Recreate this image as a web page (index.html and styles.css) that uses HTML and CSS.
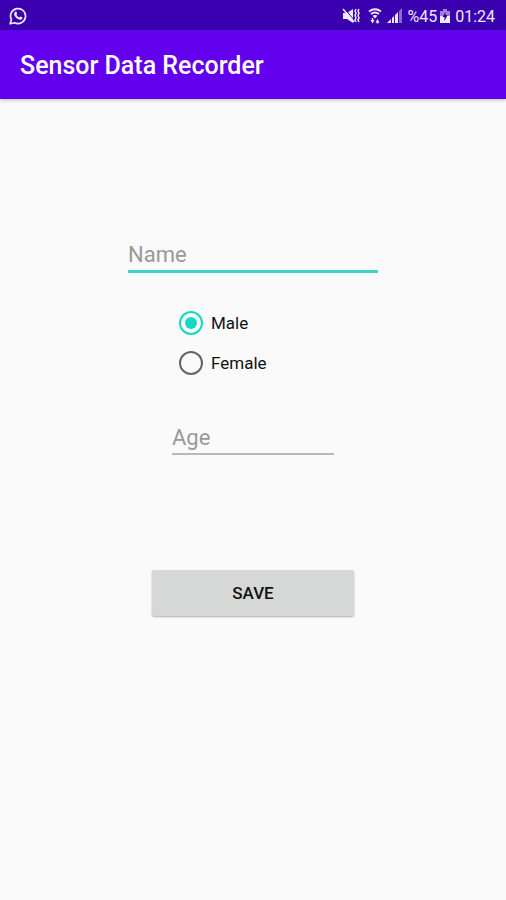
FILE: index.html
```html
<!DOCTYPE html>
<html lang="en">
<head>
<meta charset="utf-8">
<meta name="viewport" content="width=device-width, initial-scale=1">
<title>Sensor Data Recorder</title>
<link rel="stylesheet" href="styles.css">
</head>
<body>
<div class="status-bar">
  <svg class="icon-chat" width="18" height="18" viewBox="0 0 18 18" aria-hidden="true">
    <path d="M1.2 16.8l1.2-4.3A7.5 7.5 0 1 1 5.6 15.7z" fill="none" stroke="currentColor" stroke-width="1.7" stroke-linejoin="round"/>
    <path d="M6.2 4.7c.5-.5 1-.3 1.2.1l.7 1.6c.1.4-.5 1-.7 1.3.7 1.3 1.700 2.200 3 2.800.4-.4.8-1.100 1.200-1l1.700.9c.4.3.1 1.100-.4 1.600-1.200 1.100-2.800.7-4.400-.2-1.500-.9-2.800-2.400-3.200-3.700-.4-1.300.1-2.700.9-3.400z" fill="currentColor"/>
  </svg>
  <div class="status-info">
    <svg width="18" height="16" viewBox="0 0 18 16" aria-hidden="true">
      <path d="M1 5h4l6-4v14l-6-4H1z" fill="currentColor"/>
      <path d="M3 1l9 11" stroke="#3a00b0" stroke-width="1"/>
      <path d="M1 1l11 13" stroke="currentColor" stroke-width="1.500"/>
      <path d="M14 1l-1 2 1 2-1 2.500 1 2.500-1 2 1 2M17 1l-1 2 1 2-1 2.500 1 2.500-1 2 1 2" fill="none" stroke="currentColor" stroke-width="1.500"/>
    </svg>
    <svg class="icon-wifi" width="14" height="16" viewBox="0 0 14 16" aria-hidden="true">
      <path d="M1 3.500q6-4.500 12 0M3 6q4-3 8 0" fill="none" stroke="currentColor" stroke-width="1.800"/>
      <path d="M4.500 7.800q2.500-1.600 5 0L7 10.500z" fill="currentColor"/>
      <path d="M2.500 12h4L4.500 15.500zM7.500 14.500h4L9.500 11z" fill="currentColor"/>
      <path d="M4.500 10v3M9.500 13v2.500" stroke="currentColor" stroke-width="1.500"/>
    </svg>
    <svg class="icon-signal" width="16" height="16" viewBox="0 0 16 16" aria-hidden="true">
      <path d="M0 15l4-4v4zM5 15v-5l2-2v7zM8 15V7l3-3v11z" fill="currentColor"/>
      <path d="M12 15V3l3-3v15z" fill="currentColor" opacity=".45"/>
    </svg>
    <span>%45</span>
    <svg class="icon-battery" width="10" height="16" viewBox="0 0 10 16" aria-hidden="true">
      <path d="M3 1h4v2h3v5H0V3h3z" fill="currentColor" opacity=".55"/>
      <path d="M0 8h10v7H0z" fill="currentColor"/>
      <path d="M5.500 4L2.500 9h2v4l3-6h-2z" fill="#280078"/>
    </svg>
    <time>01:24</time>
  </div>
</div>
<header class="app-bar">
  <h1>Sensor Data Recorder</h1>
</header>
<main>
  <form class="form">
    <input class="field field-name" type="text" placeholder="Name" aria-label="Name">
    <div class="choices" role="radiogroup" aria-label="Gender">
      <label class="choice"><input type="radio" name="gender" checked>Male</label>
      <label class="choice"><input type="radio" name="gender">Female</label>
    </div>
    <input class="field field-age" type="text" inputmode="numeric" placeholder="Age" aria-label="Age">
    <button class="save" type="button">SAVE</button>
  </form>
</main>
</body>
</html>
```
FILE: styles.css
```css
* {
  box-sizing: border-box;
}

body {
  margin: 0;
  min-height: 100vh;
  background: #fafafa;
  color: #111;
  font-family: Roboto, "Liberation Sans", sans-serif;
}

.status-bar {
  display: flex;
  align-items: center;
  justify-content: space-between;
  height: 30px;
  padding: 2px 11px 0 9px;
  background: #3a00b0;
  color: #f0e9fc;
  font-size: 16px;
}

.status-info {
  display: flex;
  align-items: center;
}

.icon-wifi {
  margin-left: 8px;
}

.icon-signal {
  margin: 0 4px 0 5px;
}

.icon-battery {
  margin: 0 5px 0 3px;
}

.app-bar {
  display: flex;
  align-items: center;
  height: 69px;
  padding: 2px 20px 0;
  background: #6200ee;
  color: #fff;
  box-shadow: 0 1px 4px rgba(0, 0, 0, 0.25);
}

.app-bar h1 {
  margin: 0;
  font-size: 25px;
  font-weight: 500;
}

.form {
  display: flex;
  flex-direction: column;
  align-items: center;
  padding: 140px 20px 40px;
}

.field {
  max-width: 100%;
  height: 34px;
  padding: 0;
  border: 0;
  border-radius: 0;
  outline: 0;
  background: transparent;
  color: #111;
  font: 22px Roboto, "Liberation Sans", sans-serif;
}

.field::placeholder {
  color: #999;
  opacity: 1;
}

.field-name {
  width: 250px;
  border-bottom: 3px solid #3dd5c5;
}

.choices {
  display: flex;
  flex-direction: column;
  width: 148px;
  margin-top: 30px;
}

.choice {
  display: flex;
  align-items: center;
  gap: 8px;
  height: 40px;
  font-size: 17px;
}

.choice input {
  appearance: none;
  display: grid;
  place-items: center;
  width: 24px;
  height: 24px;
  margin: 0;
  border: 2px solid #666;
  border-radius: 50%;
}

.choice input:checked {
  border-color: #14d8c1;
}

.choice input:checked::before {
  content: "";
  width: 12px;
  height: 12px;
  border-radius: 50%;
  background: #14d8c1;
}

.field-age {
  width: 162px;
  margin-top: 38px;
  border-bottom: 2px solid #b9b9b9;
}

.save {
  width: 202px;
  height: 46px;
  margin-top: 115px;
  border: 0;
  border-radius: 2px;
  background: #d6d7d7;
  box-shadow: 0 1px 2px rgba(0, 0, 0, 0.3);
  color: #111;
  font: 500 17px Roboto, "Liberation Sans", sans-serif;
}
```
